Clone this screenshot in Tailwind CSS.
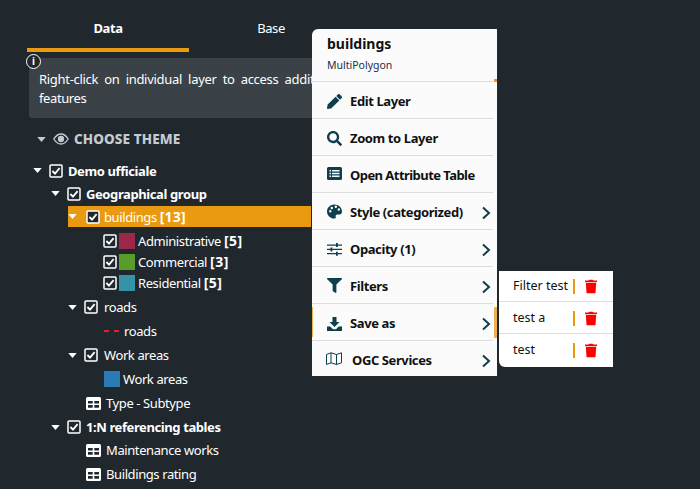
<!DOCTYPE html>
<html>
<head>
    <title>Layers</title>
    <script src="https://cdn.jsdelivr.net/npm/@tailwindcss/browser@4"></script>
</head>
<body class="bg-[#20282e] h-[489px] w-[700px] overflow-hidden relative font-['Noto_Sans','Liberation_Sans',sans-serif] text-white text-[13px] tracking-[-0.4px]">
    <svg class="hidden">
        <symbol id="check" viewBox="0 0 14 14">
            <rect x="1" y="1" width="12" height="12" rx="1" fill="#20282e" stroke="#fff" stroke-width="1.5"/>
            <path d="M3.4 7l2.600 2.600 4.600-5.400" fill="none" stroke="#fff" stroke-width="1.800"/>
        </symbol>
        <symbol id="caret" viewBox="0 0 10 6">
            <path d="M0 0h10L5 6z" fill="currentColor"/>
        </symbol>
        <symbol id="tbl" viewBox="0 0 15 13">
            <path fill-rule="evenodd" d="M1.500 0h12A1.500 1.500 0 0 1 15 1.500v10a1.500 1.500 0 0 1-1.500 1.500h-12A1.500 1.500 0 0 1 0 11.500v-10A1.500 1.500 0 0 1 1.500 0zM2 4v2.500h4.700V4zM8.300 4v2.500H13V4zM2 8v2.700h4.700V8zM8.300 8v2.700H13V8z" fill="#fff"/>
        </symbol>
        <symbol id="chev" viewBox="0 0 10 14">
            <path d="M2 1.500L8 7l-6 5.500" fill="none" stroke="#0e3f4d" stroke-width="2"/>
        </symbol>
        <symbol id="trash" viewBox="0 0 448 512">
            <path fill="#ff0000" d="M432 32H312l-9.400-18.700A24 24 0 0 0 281.100 0H166.800a23.720 23.720 0 0 0-21.400 13.300L136 32H16A16 16 0 0 0 0 48v32a16 16 0 0 0 16 16h416a16 16 0 0 0 16-16V48a16 16 0 0 0-16-16zM53.200 467a48 48 0 0 0 47.900 45h245.800a48 48 0 0 0 47.900-45L416 128H32z"/>
        </symbol>
    </svg>

    <!-- tabs -->
    <div class="flex ml-[27px] w-[326px] h-[52px]">
        <div class="w-[162px] border-b-4 border-[#e99a10] text-center font-bold pt-[18px] leading-[20px]">Data</div>
        <div class="w-[164px] text-center pt-[18px] leading-[20px]">Base</div>
    </div>

    <!-- info box -->
    <div class="relative ml-[29px] mt-[6px] w-[440px] h-[60px] bg-[#3a4248] rounded-[3px] pl-[10px] pt-[12px] leading-[19px]">
        <div class="absolute -left-[3px] -top-[4px] w-[15px] h-[15px] rounded-full bg-[#20282e] border border-white text-[10px] leading-[13px] font-bold text-center tracking-normal">i</div>
        <p class="[word-spacing:3px] tracking-[-0.3px]">Right-click on individual layer to access additional</p>
        <p>features</p>
    </div>

    <!-- theme chooser -->
    <div class="flex items-center h-[20px] mt-[11px] ml-[37px] text-[#c5ccd1] font-extrabold text-[13.5px] tracking-[0.1px]">
        <svg class="w-[9px] h-[5px] mr-[7px]"><use href="#caret"/></svg>
        <svg class="w-[16px] h-[12px] mr-[5px]" viewBox="0 0 16 12" fill="none" stroke="#c5ccd1" stroke-width="1.300"><path d="M.8 6C3 2.500 5.300 1 8 1s5 1.500 7.200 5C13 9.500 10.700 11 8 11S3 9.500.8 6z"/><circle cx="8" cy="6" r="2.500" fill="#c5ccd1"/></svg>
        CHOOSE THEME
    </div>

    <!-- layer tree -->
    <div class="mt-[10px] w-[311px] leading-[20px]">
        <div class="flex items-center h-[23px] pl-[33px] font-bold">
            <svg class="w-[9px] h-[5px] mr-[7px]"><use href="#caret"/></svg>
            <svg class="w-[14px] h-[14px] mr-[5px]"><use href="#check"/></svg>Demo ufficiale
        </div>
        <div class="flex items-center h-[23px] pl-[51px] font-bold">
            <svg class="w-[9px] h-[5px] mr-[7px]"><use href="#caret"/></svg>
            <svg class="w-[14px] h-[14px] mr-[5px]"><use href="#check"/></svg>Geographical group
        </div>
        <div class="flex items-center h-[21px] mt-[1px] ml-[68px] bg-[#e99a10]">
            <svg class="w-[9px] h-[5px] mr-[9px]"><use href="#caret"/></svg>
            <svg class="w-[14px] h-[14px] mr-[4px]"><use href="#check"/></svg>buildings&nbsp;<b class="text-[14px] tracking-[0.2px]">[13]</b>
        </div>
        <div class="flex items-center h-[21px] mt-[3px] pl-[103px]">
            <svg class="w-[14px] h-[14px] mr-[2px]"><use href="#check"/></svg>
            <span class="w-[16px] h-[16px] bg-[#9c2746] mr-[3px]"></span>Administrative&nbsp;<b class="text-[14px] tracking-[0.5px]">[5]</b>
        </div>
        <div class="flex items-center h-[21px] pl-[103px]">
            <svg class="w-[14px] h-[14px] mr-[2px]"><use href="#check"/></svg>
            <span class="w-[16px] h-[16px] bg-[#599c2a] mr-[3px]"></span>Commercial&nbsp;<b class="text-[14px] tracking-[0.5px]">[3]</b>
        </div>
        <div class="flex items-center h-[21px] pl-[103px]">
            <svg class="w-[14px] h-[14px] mr-[2px]"><use href="#check"/></svg>
            <span class="w-[16px] h-[16px] bg-[#3693a7] mr-[3px]"></span>Residential&nbsp;<b class="text-[14px] tracking-[0.5px]">[5]</b>
        </div>
        <div class="flex items-center h-[24px] mt-[2px] pl-[68px]">
            <svg class="w-[9px] h-[5px] mr-[7px]"><use href="#caret"/></svg>
            <svg class="w-[14px] h-[14px] mr-[6px]"><use href="#check"/></svg>roads
        </div>
        <div class="flex items-center h-[24px] pl-[104px]">
            <svg class="w-[15px] h-[2px] mr-[5px]" viewBox="0 0 15 2"><path d="M0 1h5M10 1h5" stroke="#e0222f" stroke-width="2"/></svg>roads
        </div>
        <div class="flex items-center h-[24px] pl-[68px]">
            <svg class="w-[9px] h-[5px] mr-[7px]"><use href="#caret"/></svg>
            <svg class="w-[14px] h-[14px] mr-[6px]"><use href="#check"/></svg>Work areas
        </div>
        <div class="flex items-center h-[24px] pl-[104px]">
            <span class="w-[16px] h-[16px] bg-[#2a7ab5] mr-[3px]"></span>Work areas
        </div>
        <div class="flex items-center h-[24px] pl-[86px]">
            <svg class="w-[15px] h-[13px] mr-[5px]"><use href="#tbl"/></svg>Type - Subtype
        </div>
        <div class="flex items-center h-[24px] pl-[51px] font-bold">
            <svg class="w-[9px] h-[5px] mr-[7px]"><use href="#caret"/></svg>
            <svg class="w-[14px] h-[14px] mr-[5px]"><use href="#check"/></svg>1:N referencing tables
        </div>
        <div class="flex items-center h-[24px] -mt-[1px] pl-[86px]">
            <svg class="w-[15px] h-[13px] mr-[5px]"><use href="#tbl"/></svg>Maintenance works
        </div>
        <div class="flex items-center h-[24px] pl-[86px]">
            <svg class="w-[15px] h-[13px] mr-[5px]"><use href="#tbl"/></svg>Buildings rating
        </div>
    </div>

    <!-- context menu -->
    <div class="absolute left-[312px] top-[29px] w-[185px] h-[347px] bg-[#fbfbfb] rounded-tl-[6px] text-[#111] font-bold text-[13px]">
        <div class="relative h-[53px] pl-[15px] pt-[5px] border-b border-[#ddd] mr-[4px] tracking-normal">
            <span class="absolute -right-[4px] -bottom-[1px] w-[3px] h-[3px] bg-[#e99a10]"></span>
            <div class="text-[14px] leading-[20px]">buildings</div>
            <div class="text-[10.5px] leading-[14px] font-normal text-[#1d2f4d] mt-[4px]">MultiPolygon</div>
        </div>
        <div class="flex items-center h-[37px] pl-[15px] pt-[4px] mr-[4px] border-b border-[#ddd]">
            <svg class="w-[15px] h-[15px] mr-[8px] -mt-[2px]" viewBox="0 0 512 512"><path fill="#0e3f4d" d="M497.900 142.100l-46.100 46.100c-4.700 4.700-12.300 4.700-17 0l-111-111c-4.700-4.700-4.700-12.300 0-17l46.100-46.100c18.700-18.700 49.100-18.700 67.900 0l60.100 60.100c18.800 18.700 18.800 49.100 0 67.900zM284.200 99.800L21.600 362.400.4 483.900c-2.900 16.400 11.400 30.600 27.800 27.800l121.500-21.300 262.600-262.600c4.700-4.700 4.700-12.300 0-17l-111-111c-4.800-4.700-12.400-4.700-17.100 0z"/></svg>Edit Layer
        </div>
        <div class="flex items-center h-[37px] pl-[15px] pt-[4px] mr-[4px] border-b border-[#ddd]">
            <svg class="w-[15px] h-[15px] mr-[8px] -mt-[2px]" viewBox="0 0 512 512"><path fill="#0e3f4d" d="M505 442.700L405.300 343c-4.500-4.500-10.600-7-17-7H372c27.600-35.300 44-79.700 44-128C416 93.100 322.900 0 208 0S0 93.100 0 208s93.100 208 208 208c48.300 0 92.700-16.400 128-44v16.300c0 6.400 2.500 12.500 7 17l99.700 99.700c9.400 9.400 24.600 9.400 33.900 0l28.300-28.300c9.400-9.400 9.400-24.600.1-34zM208 336c-70.700 0-128-57.200-128-128 0-70.700 57.200-128 128-128 70.700 0 128 57.200 128 128 0 70.700-57.200 128-128 128z"/></svg>Zoom to Layer
        </div>
        <div class="flex items-center h-[37px] pl-[15px] pt-[4px] mr-[4px] border-b border-[#ddd] tracking-[-0.55px]">
            <svg class="w-[15px] h-[13px] mr-[8px] -mt-[5px]" viewBox="0 0 15 13"><path fill="#0e3f4d" fill-rule="evenodd" d="M1.500 0h12A1.500 1.500 0 0 1 15 1.500v10a1.500 1.500 0 0 1-1.500 1.500h-12A1.500 1.500 0 0 1 0 11.500v-10A1.500 1.500 0 0 1 1.500 0zM2.500 3v1.500H4V3zM5 3v1.500h7.500V3zM2.500 5.800v1.500H4V5.800zM5 5.800v1.500h7.500V5.800zM2.500 8.600v1.500H4V8.600zM5 8.600v1.500h7.500V8.600z"/></svg>Open Attribute Table
        </div>
        <div class="flex items-center h-[37px] pl-[15px] pt-[4px] mr-[4px] border-b border-[#ddd]">
            <svg class="w-[15px] h-[15px] mr-[8px] -mt-[3px]" viewBox="0 0 16 16"><path fill="#0e3f4d" fill-rule="evenodd" d="M8 .5C3.600.5 0 3.800 0 8s3.600 7.500 7.600 7.500c1.500 0 2-1 1.700-2-.4-1.200.3-2.300 1.700-2.300h2.300c1.600 0 2.700-1.300 2.700-3C16 3.700 12.400.5 8 .5zM3.500 9a1.300 1.300 0 1 1 0-2.600 1.300 1.300 0 0 1 0 2.600zm1.600-3.500a1.300 1.300 0 1 1 0-2.600 1.300 1.300 0 0 1 0 2.600zm4.300-1.300a1.300 1.300 0 1 1 0-2.600 1.300 1.300 0 0 1 0 2.600zm3.200 2.900a1.300 1.300 0 1 1 0-2.600 1.300 1.300 0 0 1 0 2.600z"/></svg>Style (categorized)
            <svg class="w-[10px] h-[14px] ml-auto mr-[2px]"><use href="#chev"/></svg>
        </div>
        <div class="flex items-center h-[37px] pl-[15px] pt-[4px] mr-[4px] border-b border-[#ddd]">
            <svg class="w-[15px] h-[13px] mr-[8px] -mt-[2px]" viewBox="0 0 15 13"><path fill="#0e3f4d" d="M0 1.500h15v1.200H0zM0 5.800h15V7H0zM0 10.100h15v1.200H0zM9 0h1.800v4H9zM3.500 4.400h1.800v4H3.500zM9 8.700h1.800v4H9z"/></svg>Opacity (1)
            <svg class="w-[10px] h-[14px] ml-auto mr-[2px]"><use href="#chev"/></svg>
        </div>
        <div class="flex items-center h-[37px] pl-[15px] pt-[4px] mr-[4px] border-b border-[#ddd]">
            <svg class="w-[15px] h-[15px] mr-[8px] -mt-[3px]" viewBox="0 0 512 512"><path fill="#0e3f4d" d="M487.976 0H24.028C2.710 0-8.047 25.866 7.058 40.971L192 225.941V432c0 7.831 3.821 15.170 10.237 19.662l80 55.980C298.020 518.690 320 507.493 320 487.980V225.941l184.947-184.970C520.021 25.896 509.338 0 487.976 0z"/></svg>Filters
            <svg class="w-[10px] h-[14px] ml-auto mr-[2px]"><use href="#chev"/></svg>
        </div>
        <div class="relative flex items-center h-[37px] pl-[15px] pt-[4px] mr-[4px] border-b border-[#ddd]">
            <span class="absolute left-0 top-[3px] bottom-[3px] w-[1px] bg-[#eeb050]"></span>
            <span class="absolute -right-[4px] top-[3px] bottom-[2px] w-[3px] bg-[#eeb050]"></span>
            <svg class="w-[15px] h-[14px] mr-[8px]" viewBox="0 0 15 14"><path fill="#0e3f4d" d="M5.500 0h4v5h3L7.500 10 2.500 5h3zM0 9.500h3.200L6 12.200h3l2.800-2.700H15V14H0z"/></svg>Save as
            <svg class="w-[10px] h-[14px] ml-auto mr-[2px]"><use href="#chev"/></svg>
        </div>
        <div class="flex items-center h-[35px] pl-[14px] pt-[4px] mr-[4px]">
            <svg class="w-[16px] h-[13px] mr-[10px] -mt-[4px]" viewBox="0 0 16 13" fill="none" stroke="#0e3f4d"><path d="M.5 2.500L5 .8l5.500 1.700L15.500.8v10L10.500 12.500 5 10.800.5 12.500zM5 .8v10M10.500 2.500v10"/></svg>OGC Services
            <svg class="w-[10px] h-[14px] ml-auto mr-[2px]"><use href="#chev"/></svg>
        </div>
    </div>

    <!-- filters submenu -->
    <div class="absolute left-[499px] top-[271px] w-[114px] h-[96px] bg-white rounded-bl-[6px] text-[#111] text-[12.5px] tracking-normal">
        <div class="flex items-center h-[31px] pl-[14px] border-b border-[#ddd]">
            <span class="w-[60px] whitespace-nowrap">Filter test</span><span class="w-[2px] h-[15px] bg-[#e99a10]"></span>
            <svg class="w-[12px] h-[15px] ml-[10px]"><use href="#trash"/></svg>
        </div>
        <div class="flex items-center h-[32px] pl-[14px] pt-[1px] border-b border-[#ddd]">
            <span class="w-[60px] whitespace-nowrap">test a</span><span class="w-[2px] h-[15px] bg-[#e99a10]"></span>
            <svg class="w-[12px] h-[15px] ml-[10px]"><use href="#trash"/></svg>
        </div>
        <div class="flex items-center h-[32px] pl-[14px]">
            <span class="w-[60px] whitespace-nowrap">test</span><span class="w-[2px] h-[15px] bg-[#e99a10]"></span>
            <svg class="w-[12px] h-[15px] ml-[10px]"><use href="#trash"/></svg>
        </div>
    </div>
</body>
</html>
